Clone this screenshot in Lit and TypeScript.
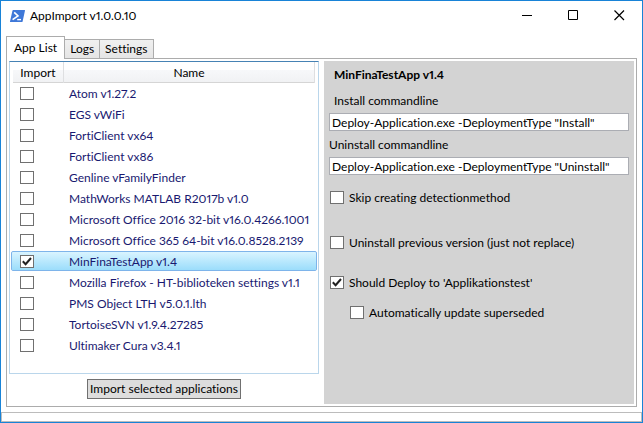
import { LitElement, html, css, svg, nothing } from "lit";
import { customElement, property, state } from "lit/decorators.js";
import { classMap } from "lit/directives/class-map.js";

interface AppEntry {
  name: string;
  selected: boolean;
}

const sharedStyles = css`
  * {
    box-sizing: border-box;
  }
  input[type="checkbox"] {
    appearance: none;
    flex: none;
    display: block;
    width: 14px;
    height: 13px;
    margin: 0;
    border: 1px solid #707070;
    border-radius: 0;
    background: #fff;
  }
  .box {
    display: grid;
    flex: none;
    width: 14px;
    height: 13px;
  }
  .box > * {
    grid-area: 1 / 1;
  }
  .tick {
    width: 14px;
    height: 13px;
    pointer-events: none;
    fill: none;
    stroke: #212121;
    stroke-width: 2;
  }
`;

const tick = svg`<svg class="tick" viewBox="0 0 14 13" aria-hidden="true"><path d="M2.8 6.3 L5.6 9.2 L11 3"/></svg>`;

@customElement("title-bar")
export class TitleBar extends LitElement {
  @property() heading = "";

  static styles = css`
    :host {
      display: flex;
      align-items: center;
      height: 29px;
      padding-left: 8px;
    }
    .logo {
      width: 16px;
      height: 14px;
      margin-right: 5px;
    }
    .heading {
      flex: 1;
      margin: 0;
      font-size: 12px;
      font-weight: 400;
    }
    .control {
      display: grid;
      place-items: center;
      width: 46px;
      height: 28px;
      padding: 0;
      border: 0;
      background: none;
    }
    .control svg {
      width: 11px;
      height: 11px;
      fill: none;
      stroke: #000;
    }
  `;

  render() {
    return html`
      <svg class="logo" viewBox="0 0 16 14" aria-hidden="true">
        <path d="M4.2 1 H15.6 Q16.1 1 16 1.6 L13.6 12.4 Q13.4 13 12.8 13 H1.4 Q0.8 13 1 12.4 L3.5 1.6 Q3.7 1 4.2 1 Z" fill="#3f78d8" />
        <path d="M5.2 3.4 L9 7 L3.6 10.6" fill="none" stroke="#fff" stroke-width="1.6" />
        <path d="M8.2 10.6 H12" stroke="#fff" stroke-width="1.4" />
      </svg>
      <h1 class="heading">${this.heading}</h1>
      <button class="control" aria-label="Minimize">
        <svg viewBox="0 0 11 11"><path d="M0 5.5 H10" /></svg>
      </button>
      <button class="control" aria-label="Maximize">
        <svg viewBox="0 0 11 11"><path d="M0.5 0.5 H9.5 V9.5 H0.5 Z" /></svg>
      </button>
      <button class="control" aria-label="Close">
        <svg viewBox="0 0 11 11"><path d="M0.5 0.5 L10 10 M10 0.5 L0.5 10" stroke-width="1.2" /></svg>
      </button>
    `;
  }
}

@customElement("app-table")
export class AppTable extends LitElement {
  @property({ attribute: false }) entries: AppEntry[] = [];

  static styles = [
    sharedStyles,
    css`
      :host {
        display: block;
        flex: 1;
        padding: 0 1px;
        border: 1px solid #bad6eb;
        border-top-color: #4682b4;
        background: #fff;
      }
      table,
      thead,
      tbody {
        display: block;
      }
      tr {
        display: grid;
        grid-template-columns: 52px minmax(0, 1fr);
      }
      thead tr {
        height: 21px;
        margin: 0 2px;
        grid-template-columns: 51px 1fr;
        border-bottom: 1px solid #d5d5d5;
        background: linear-gradient(#fff, #fff 40%, #f7f8fa 41%, #f1f2f4);
      }
      th {
        padding: 0;
        border-right: 1px solid #dedfe1;
        font-weight: 400;
        line-height: 21px;
        text-align: center;
      }
      tbody tr {
        align-items: center;
        height: 20px;
        margin-bottom: 1px;
        border: 1px solid transparent;
        border-radius: 2px;
        color: #191970;
      }
      tbody tr.selected {
        border-color: #7eb4ea;
        background: linear-gradient(#d9f4ff, #9bddfb);
        background-clip: padding-box;
      }
      td {
        padding: 0 0 0 8px;
        white-space: nowrap;
      }
      td + td {
        padding-left: 5px;
      }
    `,
  ];

  render() {
    return html`
      <table>
        <thead>
          <tr><th>Import</th><th>Name</th></tr>
        </thead>
        <tbody>
          ${this.entries.map(
            (entry, i) => html`
              <tr class=${classMap({ selected: entry.selected })}>
                <td>
                  <span class="box">
                    <input type="checkbox" aria-labelledby="name-${i}" .checked=${entry.selected} />
                    ${entry.selected ? tick : nothing}
                  </span>
                </td>
                <td id="name-${i}">${entry.name}</td>
              </tr>
            `
          )}
        </tbody>
      </table>
    `;
  }
}

@customElement("app-details")
export class AppDetails extends LitElement {
  @property() name = "";

  static styles = [
    sharedStyles,
    css`
      :host {
        display: block;
        padding: 5px;
        background: #d3d3d3;
      }
      .name {
        margin: 0 0 8px;
        padding-left: 5px;
        font-size: 12px;
        line-height: 18px;
      }
      .caption {
        display: block;
        line-height: 18px;
        margin-bottom: 3px;
      }
      .inset {
        padding-left: 5px;
      }
      .command {
        display: block;
        width: 100%;
        height: 18px;
        margin-bottom: 5px;
        padding: 0 2px;
        border: 1px solid #abadb3;
        background: #fff;
        color: #000;
        font: inherit;
      }
      .option {
        display: flex;
        align-items: center;
        gap: 5px;
        height: 18px;
        padding-left: 1px;
      }
      .options {
        display: grid;
        padding-top: 8px;
      }
      .spaced {
        margin-bottom: 27px;
      }
      .medium {
        margin-bottom: 22px;
      }
      .small {
        margin-bottom: 12px;
      }
      .nested {
        padding-left: 21px;
      }
    `,
  ];

  private option(label: string, kind: string, checked = false) {
    return html`
      <label class="option ${kind}">
        <span class="box">
          <input type="checkbox" .checked=${checked} />
          ${checked ? tick : nothing}
        </span>
        ${label}
      </label>
    `;
  }

  render() {
    return html`
      <h2 class="name">${this.name}</h2>
      <label class="caption inset" for="install">Install commandline</label>
      <input class="command" id="install" type="text" value='Deploy-Application.exe -DeploymentType "Install"' />
      <label class="caption" for="uninstall">Uninstall commandline</label>
      <input class="command" id="uninstall" type="text" value='Deploy-Application.exe -DeploymentType "Uninstall"' />
      <div class="options">
        ${this.option("Skip creating detectionmethod", "spaced")}
        ${this.option("Uninstall previous version (just not replace)", "medium")}
        ${this.option("Should Deploy to 'Applikationstest'", "small", true)}
        ${this.option("Automatically update superseded", "nested")}
      </div>
    `;
  }
}

@customElement("app-root")
export class AppRoot extends LitElement {
  @state() private tab = "App List";

  private tabs = ["App List", "Logs", "Settings"];

  private entries: AppEntry[] = [
    "Atom v1.27.2",
    "EGS vWiFi",
    "FortiClient vx64",
    "FortiClient vx86",
    "Genline vFamilyFinder",
    "MathWorks MATLAB R2017b v1.0",
    "Microsoft Office 2016 32-bit v16.0.4266.1001",
    "Microsoft Office 365 64-bit v16.0.8528.2139",
    "MinFinaTestApp v1.4",
    "Mozilla Firefox - HT-biblioteken settings v1.1",
    "PMS Object LTH v5.0.1.lth",
    "TortoiseSVN v1.9.4.27285",
    "Ultimaker Cura v3.4.1",
  ].map((name) => ({ name, selected: name === "MinFinaTestApp v1.4" }));

  static styles = [
    sharedStyles,
    css`
      :host {
        display: flex;
        flex-direction: column;
        box-sizing: border-box;
        min-height: 100vh;
        border: 1px solid #1883d7;
        background: #fff;
        color: #000;
        font: 12px Lato, "Open Sans", sans-serif;
        font-variant-ligatures: none;
        font-variant-numeric: proportional-nums;
      }
      .tabs {
        display: flex;
        align-items: flex-end;
        height: 23px;
        margin: 6px 5px 0;
      }
      .tab {
        height: 20px;
        margin: 0 0 0 -1px;
        padding: 0 5px;
        border: 1px solid #acacac;
        background: linear-gradient(#f0f0f0, #e5e5e5);
        color: #000;
        font: inherit;
        line-height: 18px;
      }
      .tab.active {
        z-index: 1;
        height: 23px;
        margin: 0;
        padding: 0 7px;
        border-bottom: 0;
        background: #fff;
      }
      .page {
        flex: 1;
        display: grid;
        grid-template-columns: repeat(2, minmax(0, 1fr));
        gap: 5px;
        margin: -1px 5px 5px;
        padding: 2px;
        border: 1px solid #acacac;
      }
      .left {
        display: flex;
        flex-direction: column;
        align-items: stretch;
      }
      .import {
        align-self: center;
        height: 20px;
        margin: 5px 0;
        padding: 0 2px;
        border: 1px solid #707070;
        background: #ddd;
        color: #000;
        font: inherit;
        line-height: 18px;
      }
      .status {
        height: 10px;
        border: 1px solid #bcbcbc;
      }
    `,
  ];

  render() {
    const selected = this.entries.find((entry) => entry.selected);
    return html`
      <title-bar heading="AppImport v1.0.0.10"></title-bar>
      <div class="tabs" role="tablist">
        ${this.tabs.map(
          (name) => html`
            <button
              class=${classMap({ tab: true, active: name === this.tab })}
              role="tab"
              aria-selected=${name === this.tab}
              @click=${() => (this.tab = name)}
            >${name}</button>
          `
        )}
      </div>
      <main class="page">
        <section class="left">
          <app-table .entries=${this.entries}></app-table>
          <button class="import">Import selected applications</button>
        </section>
        <app-details .name=${selected?.name ?? ""}></app-details>
      </main>
      <footer class="status"></footer>
    `;
  }
}
